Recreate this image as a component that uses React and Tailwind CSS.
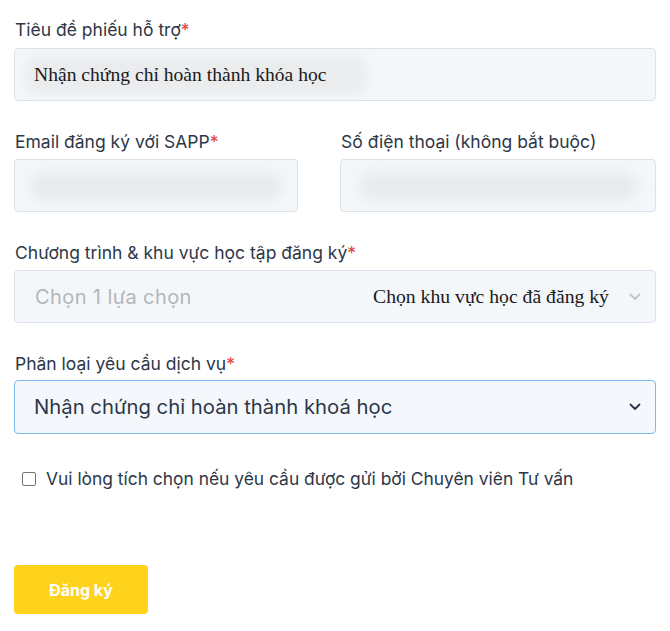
import React from "react";

function Label({ children, required }) {
  return (
    <div className="text-[17.5px] leading-[24px] text-[#2d3748]">
      {children}
      {required && <span className="text-[#e53e3e]">*</span>}
    </div>
  );
}

function Chevron({ className }) {
  return (
    <svg width="12" height="8" viewBox="0 0 12 8" className={className} fill="none">
      <path d="M1.5 1.5L6 6L10.5 1.5" stroke="currentColor" strokeWidth="1.8" strokeLinecap="round" strokeLinejoin="round" />
    </svg>
  );
}

export default function App() {
  return (
    <div className="w-[670px] h-[631px] bg-white px-[14px] pt-[18px]" style={{ fontFamily: "Inter, 'Noto Sans', sans-serif" }}>
      <div className="pl-[1px]">
        <Label required>Tiêu đề phiếu hỗ trợ</Label>
      </div>
      <div className="mt-[6px] h-[53px] rounded-[4px] border border-[#dbe2ea] bg-[#f4f7fa] flex items-center pl-[11px]">
        <div className="relative h-[38px] w-[340px] flex items-center">
          <div className="absolute inset-0 rounded-[8px] bg-[#eaecee] blur-[4px]" />
          <span className="relative pl-[8px] text-[19.6px] text-[#1a1a1a]" style={{ fontFamily: "'Liberation Serif', serif" }}>
            Nhận chứng chỉ hoàn thành khóa học
          </span>
        </div>
      </div>

      <div className="mt-[29px] flex gap-[42px]">
        <div className="w-[284px]">
          <div className="pl-[1px]">
            <Label required>Email đăng ký với SAPP</Label>
          </div>
          <div className="mt-[5px] h-[53px] rounded-[4px] border border-[#dbe2ea] bg-[#f4f7fa] flex items-center px-[14px]">
            <div className="h-[28px] w-full rounded-full bg-[#e8eaec] blur-[6px]" />
          </div>
        </div>
        <div className="flex-1">
          <div className="pl-[1px]">
            <Label>Số điện thoại (không bắt buộc)</Label>
          </div>
          <div className="mt-[5px] h-[53px] rounded-[4px] border border-[#dbe2ea] bg-[#f4f7fa] flex items-center px-[18px]">
            <div className="h-[28px] w-full rounded-full bg-[#e8eaec] blur-[6px]" />
          </div>
        </div>
      </div>

      <div className="mt-[29px] pl-[1px]">
        <Label required>Chương trình &amp; khu vực học tập đăng ký</Label>
      </div>
      <div className="mt-[5px] h-[53px] rounded-[4px] border border-[#dbe2ea] bg-[#f4f7fa] flex items-center pl-[20px] pr-[14px]">
        <span className="text-[20px] tracking-[0.4px] text-[#b3b6ba] w-[338px]">Chọn 1 lựa chọn</span>
        <span className="flex-1 text-[19.7px] text-[#1a1a1a]" style={{ fontFamily: "'Liberation Serif', serif" }}>
          Chọn khu vực học đã đăng ký
        </span>
        <Chevron className="text-[#c0c4c9]" />
      </div>

      <div className="mt-[29px] pl-[1px]">
        <Label required>Phân loại yêu cầu dịch vụ</Label>
      </div>
      <div className="mt-[4px] h-[54px] rounded-[4px] border border-[#7db9eb] bg-[#f4f7fb] flex items-center pl-[19px] pr-[14px]">
        <span className="flex-1 text-[20.3px] text-[#2d3748]">Nhận chứng chỉ hoàn thành khoá học</span>
        <Chevron className="text-[#2d3748]" />
      </div>

      <div className="mt-[33px] flex items-center pl-[8px]">
        <div className="w-[14px] h-[14px] rounded-[2px] border border-[#767676] bg-white" />
        <span className="ml-[10px] text-[17.4px] leading-[24px] text-[#2d3748]">
          Vui lòng tích chọn nếu yêu cầu được gửi bởi Chuyên viên Tư vấn
        </span>
      </div>

      <button className="mt-[74px] w-[134px] h-[49px] rounded-[4px] bg-[#ffd31c] text-white font-bold text-[16px]">
        Đăng ký
      </button>
    </div>
  );
}
